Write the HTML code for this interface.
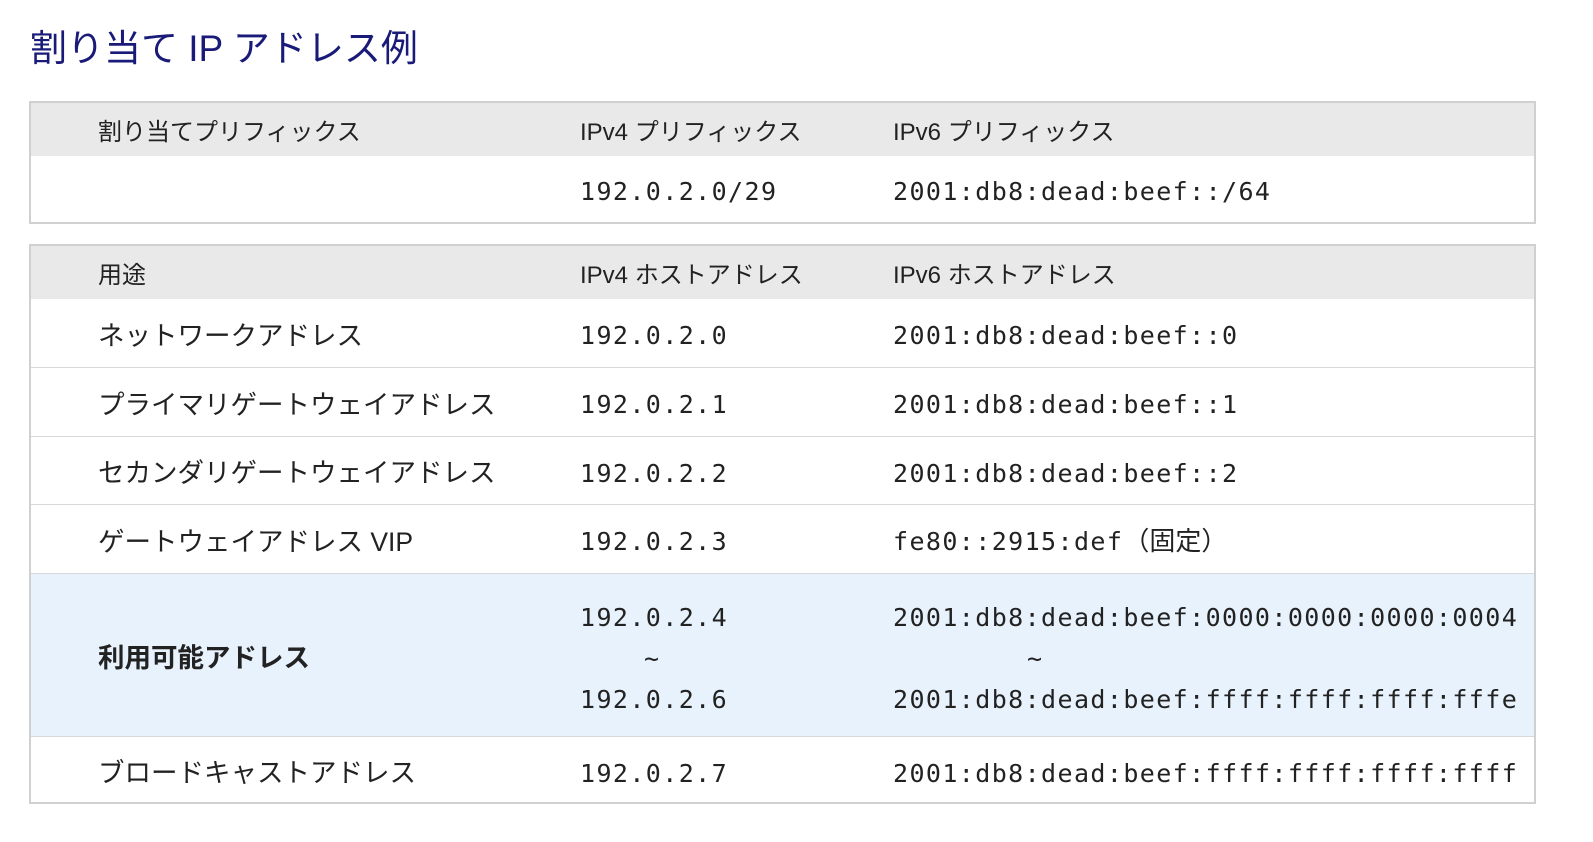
<!DOCTYPE html><html><head><meta charset="utf-8"><style>
body{margin:0;background:#fff;font-family:"Liberation Sans","Noto Sans CJK JP",sans-serif;color:#222;}
h1{position:absolute;left:30px;top:24px;margin:0;font-weight:normal;font-size:37px;color:#1a1a78;line-height:50px;}
.t{position:absolute;left:29px;width:1507px;border:2px solid #d0d0d0;box-sizing:border-box;}
.r{position:relative;border-top:1px solid #d8d8d8;}
.r:first-child{border-top:none}
.h{background:#e9e9e9;}
.c{position:absolute;top:0;bottom:0;display:flex;align-items:center;}
.c1{left:67px;font-size:26.5px}
.h .c{font-size:24px}
.c2{left:549px}.c3{left:862px}
.m{font-family:"DejaVu Sans Mono","Liberation Mono",monospace;font-size:25px;letter-spacing:1.4px;padding-top:5px}
.b{background:#e8f2fc}
.tl{display:block;line-height:41px}
</style></head><body>
<h1>割り当て IP アドレス例</h1>
<div class="t" style="top:101px;height:123px">
<div class="r h" style="height:53px"><div class="c c1">割り当てプリフィックス</div><div class="c c2">IPv4 プリフィックス</div><div class="c c3">IPv6 プリフィックス</div></div>
<div class="r" style="height:66px;border-top:none"><div class="c c2 m">192.0.2.0/29</div><div class="c c3 m">2001:db8:dead:beef::/64</div></div>
</div>
<div class="t" style="top:244px;height:560px">
<div class="r h" style="height:53px"><div class="c c1">用途</div><div class="c c2">IPv4 ホストアドレス</div><div class="c c3">IPv6 ホストアドレス</div></div>
<div class="r" style="height:68px;border-top:none"><div class="c c1">ネットワークアドレス</div><div class="c c2 m">192.0.2.0</div><div class="c c3 m">2001:db8:dead:beef::0</div></div>
<div class="r" style="height:68px"><div class="c c1">プライマリゲートウェイアドレス</div><div class="c c2 m">192.0.2.1</div><div class="c c3 m">2001:db8:dead:beef::1</div></div>
<div class="r" style="height:67px"><div class="c c1">セカンダリゲートウェイアドレス</div><div class="c c2 m">192.0.2.2</div><div class="c c3 m">2001:db8:dead:beef::2</div></div>
<div class="r" style="height:68px"><div class="c c1">ゲートウェイアドレス VIP</div><div class="c c2 m">192.0.2.3</div><div class="c c3"><span class="m">fe80::2915:def</span><span style="font-size:26px">（固定）</span></div></div>
<div class="r b" style="height:162px"><div class="c c1" style="font-weight:bold">利用可能アドレス</div>
<div class="c2 m" style="position:absolute;top:18px"><span class="tl">192.0.2.4</span><span class="tl" style="padding-left:64px">~</span><span class="tl">192.0.2.6</span></div>
<div class="c3 m" style="position:absolute;top:18px"><span class="tl">2001:db8:dead:beef:0000:0000:0000:0004</span><span class="tl" style="padding-left:134px">~</span><span class="tl">2001:db8:dead:beef:ffff:ffff:ffff:fffe</span></div></div>
<div class="r" style="height:67px"><div class="c c1">ブロードキャストアドレス</div><div class="c c2 m">192.0.2.7</div><div class="c c3 m">2001:db8:dead:beef:ffff:ffff:ffff:ffff</div></div>
</div>
</body></html>
